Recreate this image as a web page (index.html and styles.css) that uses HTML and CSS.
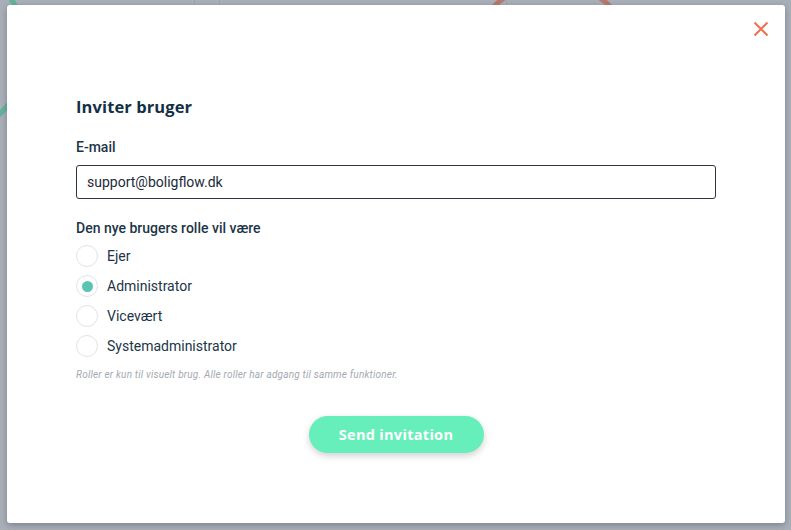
FILE: index.html
```html
<!DOCTYPE html>
<html lang="da">
<head>
<meta charset="UTF-8">
<meta name="viewport" content="width=device-width, initial-scale=1.0">
<title>Inviter bruger</title>
<link rel="stylesheet" href="styles.css">
</head>
<body>
<div class="page-behind">
    <div class="ring ring-red"></div>
    <div class="ring ring-green"></div>
    <div class="vline" style="left: 194px"></div>
    <div class="vline" style="left: 219px"></div>
    <div class="vline" style="left: 506px"></div>
</div>

<div class="overlay">
    <div class="modal">
        <button class="close" aria-label="Luk">
            <svg width="16" height="16" viewBox="0 0 16 16">
                <path d="M1.5 1.5 L14.5 14.5 M14.5 1.5 L1.5 14.5" stroke="#f0714f" stroke-width="2" fill="none"/>
            </svg>
        </button>

        <form class="invite">
            <h2 class="title">Inviter bruger</h2>

            <label class="label" for="email">E-mail</label>
            <input class="input" id="email" type="email" value="support@boligflow.dk">

            <div class="label role-label">Den nye brugers rolle vil være</div>
            <div class="roles">
                <label class="role"><span class="radio"></span>Ejer</label>
                <label class="role"><span class="radio checked"></span>Administrator</label>
                <label class="role"><span class="radio"></span>Vicevært</label>
                <label class="role"><span class="radio"></span>Systemadministrator</label>
            </div>
            <p class="note">Roller er kun til visuelt brug. Alle roller har adgang til samme funktioner.</p>

            <div class="actions">
                <button type="button" class="send">Send invitation</button>
            </div>
        </form>
    </div>
</div>
</body>
</html>
```
FILE: styles.css
```css
html, body {
    margin: 0;
    height: 100%;
}

body {
    background: #a9afb8;
    font-family: Roboto, "Liberation Sans", sans-serif;
    overflow: hidden;
    position: relative;
}

/* the dimmed app underneath the dialog */
.page-behind {
    position: absolute;
    inset: 0;
}

.vline {
    position: absolute;
    top: 0;
    width: 1px;
    height: 8px;
    background: #9ea4ad;
}

.ring {
    position: absolute;
    border-radius: 50%;
    border: 5px solid;
}

.ring-red {
    left: 467px;
    top: -20px;
    width: 160px;
    height: 160px;
    border-color: #b57a72;
}

.ring-green {
    left: -150px;
    top: -40px;
    width: 170px;
    height: 170px;
    border-color: #63b39d;
}

.overlay {
    position: relative;
    padding: 5px 6px 0 7px;
}

.modal {
    position: relative;
    width: 778px;
    height: 518px;
    box-sizing: border-box;
    background: #fff;
    border-radius: 3px;
    box-shadow: 0 2px 6px rgba(40, 50, 60, 0.35);
    padding: 91px 69px 0 69px;
}

.close {
    position: absolute;
    top: 16px;
    right: 16px;
    width: 16px;
    height: 16px;
    padding: 0;
    border: 0;
    background: none;
    cursor: pointer;
}

.close svg {
    display: block;
}

.invite {
    display: flex;
    flex-direction: column;
    color: #1c3548;
}

.title {
    margin: 0 0 20px 0;
    font-family: "Open Sans", "DejaVu Sans", sans-serif;
    font-weight: 700;
    font-size: 16.5px;
    line-height: 22px;
    letter-spacing: 0.1px;
    color: #143046;
}

.label {
    font-size: 14px;
    font-weight: 500;
    line-height: 18px;
    color: #1c3548;
}

.input {
    margin-top: 9px;
    height: 34px;
    box-sizing: border-box;
    border: 1px solid #2d3442;
    border-radius: 3px;
    padding: 0 10px;
    font-family: Roboto, "Liberation Sans", sans-serif;
    font-size: 14px;
    color: #1c2a38;
    outline: none;
}

.role-label {
    margin-top: 20px;
}

.roles {
    display: flex;
    flex-direction: column;
    gap: 8px;
    margin-top: 8px;
}

.role {
    display: flex;
    align-items: center;
    gap: 9px;
    font-size: 14px;
    line-height: 22px;
    color: #1c3548;
}

.radio {
    width: 22px;
    height: 22px;
    box-sizing: border-box;
    border: 1px solid #e1e3e5;
    border-radius: 50%;
    display: flex;
    align-items: center;
    justify-content: center;
}

.radio.checked::after {
    content: "";
    width: 11px;
    height: 11px;
    border-radius: 50%;
    background: #5bc3b3;
}

.note {
    margin: 12px 0 0 0;
    font-size: 10px;
    font-style: italic;
    line-height: 12px;
    color: #a3a9b0;
    letter-spacing: 0.2px;
}

.actions {
    display: flex;
    justify-content: center;
    margin-top: 35px;
}

.send {
    width: 175px;
    height: 37px;
    border: 0;
    border-radius: 19px;
    background: #66efba;
    color: #fff;
    font-family: "Open Sans", "DejaVu Sans", sans-serif;
    font-weight: 700;
    font-size: 14.5px;
    letter-spacing: 0.3px;
    box-shadow: 0 3px 7px rgba(0, 0, 0, 0.18);
    cursor: pointer;
}
```
